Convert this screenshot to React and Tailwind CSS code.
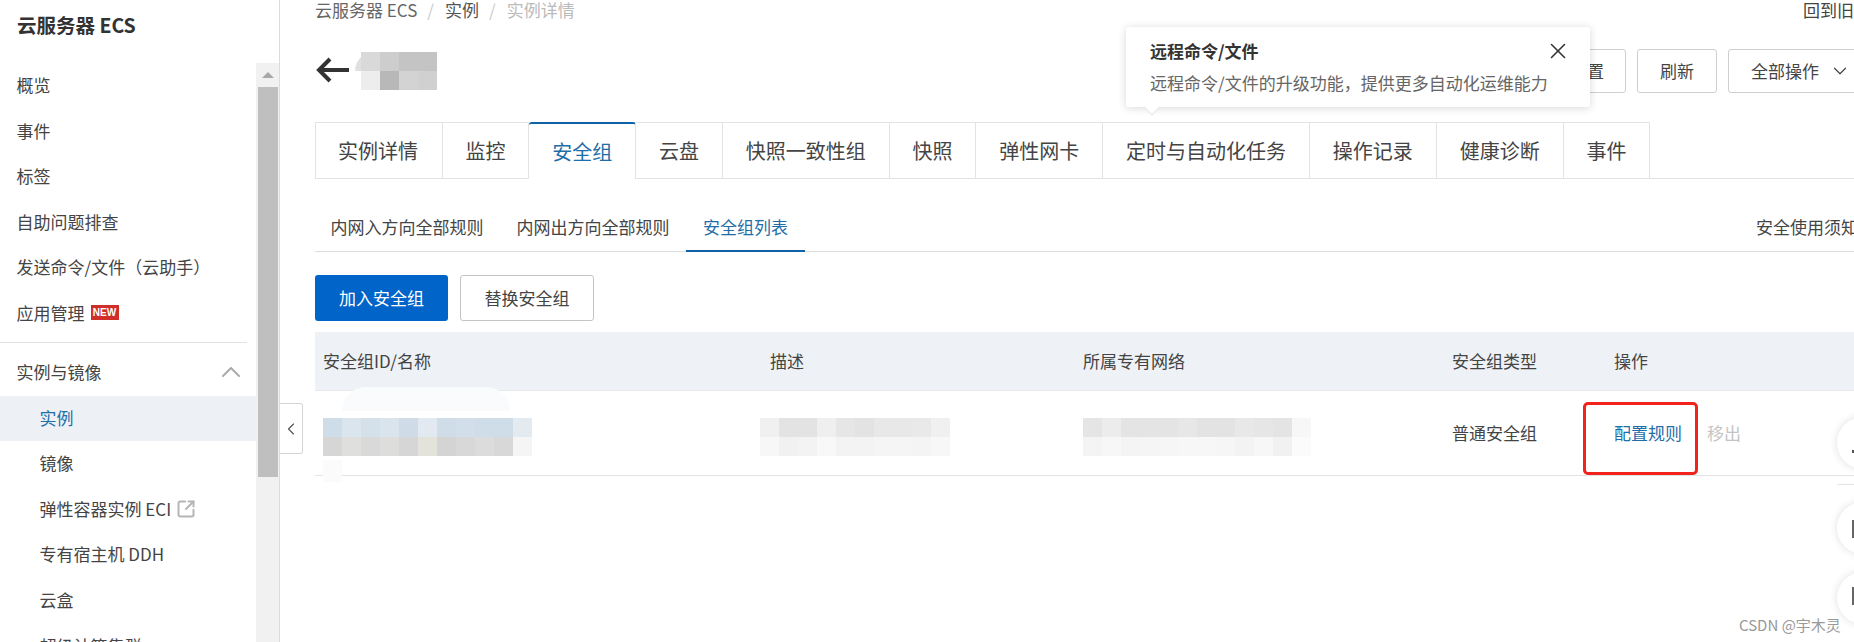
import React from "react";
import { ChevronUp, ChevronDown, ChevronLeft, X, SquareArrowOutUpRight } from "lucide-react";

const topItems = ["概览", "事件", "标签", "自助问题排查", "发送命令/文件（云助手）"];
const tabs = ["实例详情", "监控", "安全组", "云盘", "快照一致性组", "快照", "弹性网卡", "定时与自动化任务", "操作记录", "健康诊断", "事件"];

function Mosaic({ rows, cell = 19, className = "" }) {
  return (
    <div className={"flex flex-col shrink-0 " + className}>
      {rows.map((row, i) => (
        <div key={i} className="flex">
          {row.map((c, j) => (
            <div key={j} style={{ background: c, width: cell, height: 19 }} />
          ))}
        </div>
      ))}
    </div>
  );
}

const nameRows = [
  ["#cfdde9", "#dbe5ee", "#d5e1ea", "#d9e4ec", "#cfdce8", "#e2e9f0", "#cfdde8", "#d2dfea", "#cfdde9", "#cfdde9", "#e4ebf0"],
  ["#d6d6d6", "#dfdfde", "#d9d9d9", "#dddddc", "#d6d6d6", "#e3e3dc", "#d4d4d4", "#d8d8d8", "#dcdcdc", "#d8d8d8", "#f5f5f5"],
];
const descRows = [
  ["#f0f0f0", "#e3e3e3", "#e3e3e3", "#efefef", "#e6e6e6", "#e3e3e3", "#e8e8e8", "#e8e8e8", "#e9e9e9", "#f0f0f0"],
  ["#f7f7f7", "#f1f1f1", "#f3f3f3", "#f8f8f8", "#f3f3f3", "#f3f3f3", "#f5f5f5", "#f5f5f5", "#f4f4f4", "#f7f7f7"],
];
const vpcRows = [
  ["#e5e5e5", "#ececec", "#e4e4e4", "#e4e4e4", "#e4e4e4", "#e7e7e7", "#e3e3e3", "#e3e3e3", "#e8e8e8", "#e6e6e6", "#e4e4e4", "#f7f7f7"],
  ["#f4f4f4", "#f7f7f7", "#f4f4f4", "#f5f5f5", "#f6f6f6", "#f7f7f7", "#f7f7f7", "#f6f6f6", "#f3f3f3", "#f7f7f7", "#f1f1f1", "#fbfbfb"],
];
const titleRows = [
  ["#d9d9d9", "#cdcdcd", "#c4c4c4", "#c4c4c4"],
  ["#ededed", "#b8b8b8", "#d3d3d3", "#d0d0d0"],
];

function NavItem({ children, indent, active }) {
  return (
    <div className={"h-[45.6px] pb-[2px] flex items-center " + (indent ? "pl-[39.5px] " : "pl-[16.5px] ") + (active ? "bg-[#edf1f6] text-[#1f6ea8]" : "text-[#444]")}>
      {children}
    </div>
  );
}

function Sidebar() {
  return (
    <aside className="w-[280px] shrink-0 border-r border-[#dcdcdc] flex flex-col h-full text-[17px]">
      <div className="h-[50px] mb-[13px] pl-[17px] flex items-center text-[19.5px] font-bold text-[#333]">云服务器 ECS</div>
      <div className="flex-1 flex overflow-hidden">
        <nav className="w-[256px] shrink-0">
          {topItems.map((t) => (
            <NavItem key={t}>{t}</NavItem>
          ))}
          <NavItem>
            <span>应用管理</span>
            <span className="ml-[6px] w-[28px] h-[15px] bg-[#cf2f28] text-white text-[10px] font-bold leading-[15px] text-center font-['Liberation_Sans',sans-serif]">NEW</span>
          </NavItem>
          <div className="mt-[5px] mb-[8px] w-[247px] border-b border-[#e3e3e3]" />
          <div className="h-[45px] pb-[3px] flex items-center justify-between pl-[16.5px] pr-[17px] text-[#444]">
            <span>实例与镜像</span>
            <ChevronUp size={32} strokeWidth={1.5} className="text-[#aaa] -mr-[8px]" />
          </div>
          <NavItem indent active>实例</NavItem>
          <NavItem indent>镜像</NavItem>
          <NavItem indent>
            <span>弹性容器实例 ECI</span>
            <SquareArrowOutUpRight size={20} strokeWidth={2.4} className="ml-[5px] text-[#b5b5b5]" />
          </NavItem>
          <NavItem indent>专有宿主机 DDH</NavItem>
          <NavItem indent>云盒</NavItem>
          <NavItem indent>超级计算集群</NavItem>
        </nav>
        <div className="w-[23px] bg-[#f1f1f1] flex flex-col items-center">
          <div className="h-[24px] flex items-center justify-center">
            <svg width="12" height="6" viewBox="0 0 12 6"><path d="M6 0 L12 6 H0 Z" fill="#a8a8a8" /></svg>
          </div>
          <div className="w-[20px] h-[390px] bg-[#bfbfbf]" />
        </div>
      </div>
    </aside>
  );
}

function Tabs() {
  return (
    <div className="mt-[29px] h-[57px] flex border-b border-[#e3e3e3] text-[20px] text-[#444]">
      {tabs.map((t, i) => {
        const active = t === "安全组";
        return (
          <div
            key={t}
            className={
              "h-[57px] flex items-center border-r border-[#e3e3e3] " +
              (i === 0 ? "border-l pl-[22px] pr-[23.5px] " : "px-[22.9px] ") +
              (active
                ? "relative bg-white text-[#1f6ea8] border-t-2 border-t-[#0f62a8] rounded-t-[3px]"
                : "border-t")
            }
          >
            {t}
          </div>
        );
      })}
    </div>
  );
}

function SubTabs() {
  return (
    <div className="h-[73px] flex items-end justify-between border-b border-[#dedede] pr-[27px]">
      <div className="flex -ml-px">
        {["内网入方向全部规则", "内网出方向全部规则", "安全组列表"].map((t) => {
          const active = t === "安全组列表";
          return (
            <div
              key={t}
              className={
                "pb-[11px] leading-[24px] -mb-px border-b-2 " +
                (active ? "px-[17px] border-[#0f62a8] text-[#1f6ea8]" : "px-[16.5px] border-transparent text-[#444]")
              }
            >
              {t}
            </div>
          );
        })}
      </div>
      <div className="pb-[12px] leading-[24px] text-[#444]">安全使用须知</div>
    </div>
  );
}

function Table() {
  const cols = "grid grid-cols-[447px_313px_369px_162px_1fr] items-center";
  return (
    <div className="mt-[11px]">
      <div className={cols + " h-[59px] bg-[#eef2f6] border-b border-[#e6e8ea] text-[#444]"}>
        <div className="pl-[8px]">安全组ID/名称</div>
        <div className="pl-[8px]">描述</div>
        <div className="pl-[8px]">所属专有网络</div>
        <div className="pl-[8px]">安全组类型</div>
        <div className="pl-[8px]">操作</div>
      </div>
      <div className={cols + " h-[85px] border-b border-[#e3e3e3] text-[#444]"}>
        <div className="pl-[8px] relative">
          <div className="absolute left-[27px] top-[-23px] w-[168px] h-[24px] bg-[#fafbfd] rounded-t-[40px]" />
          <div className="absolute left-[8px] top-[50px] w-[19px] h-[22px] bg-[#fbfbfb]" />
          <Mosaic rows={nameRows} className="mt-[8px]" />
        </div>
        <div className="-ml-[2px]">
          <Mosaic rows={descRows} className="mt-[8px]" />
        </div>
        <div className="pl-[8px]">
          <Mosaic rows={vpcRows} className="mt-[8px]" />
        </div>
        <div className="pl-[8px]">普通安全组</div>
        <div className="pl-[8px] flex gap-[25px]">
          <span className="text-[#1f6ea8]">配置规则</span>
          <span className="text-[#c4c4c4]">移出</span>
        </div>
      </div>
    </div>
  );
}

function Main() {
  return (
    <main className="flex-1 min-w-0 overflow-hidden pl-[35px] text-[17px]">
      <div className="w-[1570px]">
        <div className="h-[20px] flex items-center justify-between pr-[14px] text-[#666]">
          <div className="flex items-center">
            <span>云服务器 ECS</span>
            <span className="ml-[10px] mr-[11px] text-[#ccc]">/</span>
            <span className="text-[#555]">实例</span>
            <span className="ml-[10px] mr-[11px] text-[#ccc]">/</span>
            <span className="text-[#bbb]">实例详情</span>
          </div>
          <span className="text-[#444]">回到旧版</span>
        </div>
        <div className="mt-[29px] h-[44px] flex items-center justify-between">
          <div className="flex items-center">
            <svg width="36" height="28" viewBox="0 0 36 28" className="-mt-[2px]">
              <path d="M34 14 H5 M15 3 L4 14 L15 25" fill="none" stroke="#333" strokeWidth="4" />
            </svg>
            <div className="relative ml-[10px]">
              <div className="absolute left-[-6px] top-0 w-[25px] h-[19px] bg-[#e0e0e0] rounded-tl-[19px]" />
              <Mosaic rows={titleRows} className="relative" />
            </div>
          </div>
          <div className="flex gap-[11px] h-[44px] text-[#444]">
            <button className="w-[100px] border border-[#cfcfcf] rounded-[3px] text-right pr-[21px]">重置</button>
            <button className="w-[80px] border border-[#cfcfcf] rounded-[3px]">刷新</button>
            <button className="w-[157px] border border-[#cfcfcf] rounded-[3px] flex items-center pl-[22px]">
              全部操作
              <ChevronDown size={22} strokeWidth={1.3} className="ml-[10px]" />
            </button>
          </div>
        </div>
        <Tabs />
        <SubTabs />
        <div className="mt-[23px] flex gap-[12px] h-[46px]">
          <button className="w-[133px] rounded-[3px] bg-[#0064c8] text-white">加入安全组</button>
          <button className="w-[134px] rounded-[3px] border border-[#c4c4c4] text-[#444]">替换安全组</button>
        </div>
        <Table />
      </div>
    </main>
  );
}

export default function App() {
  return (
    <div className="relative w-[1854px] h-[642px] overflow-hidden bg-white flex font-['Noto_Sans_CJK_SC','Noto_Sans',sans-serif]">
      <Sidebar />
      <Main />

      {/* collapse handle */}
      <div className="absolute left-[280px] top-[403px] w-[23px] h-[51px] bg-white border border-l-0 border-[#d5d5d5] rounded-r-[3px] flex items-center justify-center text-[#555]">
        <ChevronLeft size={20} strokeWidth={1.4} />
      </div>

      {/* tooltip */}
      <div className="absolute left-[1126px] top-[27px] w-[464px] h-[80px] bg-white rounded-[3px] shadow-[0_1px_8px_rgba(0,0,0,0.16)] pl-[24px] pt-[11px] text-[17px]">
        <div className="leading-[26px] font-bold text-[#333]">远程命令/文件</div>
        <div className="mt-[6px] leading-[26px] text-[#666]">远程命令/文件的升级功能，提供更多自动化运维能力</div>
        <X size={26} strokeWidth={1.5} className="absolute right-[19px] top-[11px] text-[#333]" />
        <div className="absolute left-[20px] bottom-[-6px] w-[12px] h-[12px] bg-white rotate-45 border-r border-b border-[#e6e6e6]" />
      </div>

      {/* annotation */}
      <div className="absolute left-[1583px] top-[402px] w-[115px] h-[73px] border-[3px] border-[#f3231c] rounded-[5px]" />

      {/* floating buttons */}
      <div className="absolute left-[1837px] top-[417px] w-[52px] h-[52px] rounded-full bg-white shadow-[0_0_8px_rgba(0,0,0,0.13)]">
        <div className="absolute left-[15px] top-[33px] w-[3px] h-[3px] bg-[#555]" />
      </div>
      <div className="absolute left-[1837px] top-[484px] w-[17px] h-px bg-[#e3e3e3]" />
      <div className="absolute left-[1837px] top-[502px] w-[52px] h-[52px] rounded-full bg-white shadow-[0_0_8px_rgba(0,0,0,0.13)]">
        <div className="absolute left-[15px] top-[18px] w-[3px] h-[18px] bg-[#666]" />
      </div>
      <div className="absolute left-[1837px] top-[572px] w-[52px] h-[52px] rounded-full bg-white shadow-[0_0_8px_rgba(0,0,0,0.13)]">
        <div className="absolute left-[15px] top-[15px] w-[3px] h-[18px] bg-[#666]" />
      </div>

      {/* watermark */}
      <div className="absolute left-[1739px] top-[615px] leading-[20px] text-[15px] text-[#999] whitespace-nowrap">CSDN @宇木灵</div>
    </div>
  );
}
